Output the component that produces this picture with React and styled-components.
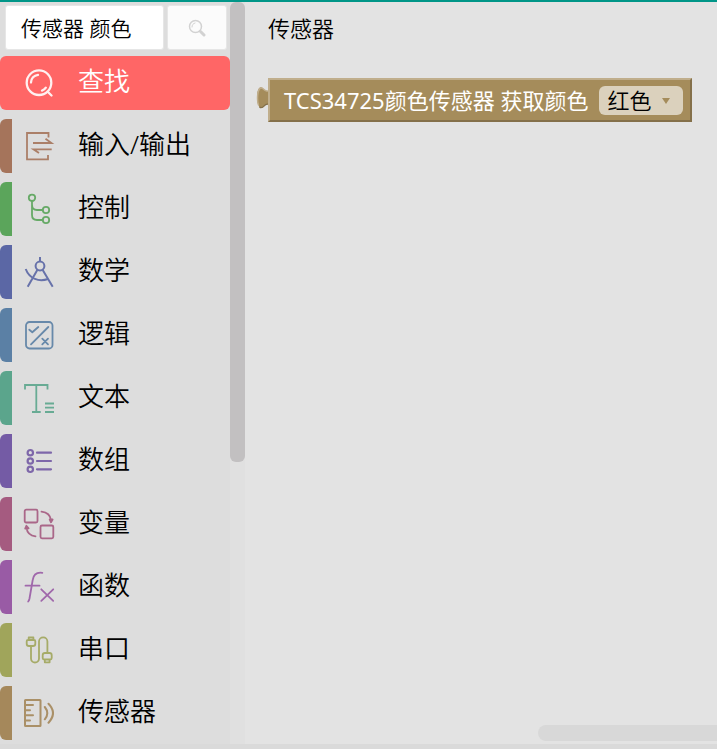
import React from "react";
import styled, { createGlobalStyle } from "styled-components";

const GlobalStyle = createGlobalStyle`
  *, *::before, *::after { box-sizing: border-box; }
  body {
    margin: 0;
    background: #dadada;
    color: #000;
    font-family: "Noto Sans", "Noto Sans CJK SC", sans-serif;
    font-weight: 350;
  }
  button, input, select { font: inherit; color: inherit; }
`;

const Page = styled.div`
  display: flex;
  min-height: 100vh;
  border-top: 2px solid #009688;
  border-bottom: 5px solid #dadada;
`;

const Sidebar = styled.aside`
  flex: none;
  width: 230px;
  padding: 3px 0 4px;
  background: #dddddd;
`;

const SearchForm = styled.form`
  display: flex;
  gap: 3px;
  height: 45px;
  margin: 0 3px 6px 5px;
`;

const SearchInput = styled.input`
  flex: 1;
  min-width: 0;
  padding: 0 15px 2px;
  border: 1px solid #e6e6e6;
  border-radius: 3px;
  background: #fff;
  font-size: 21px;
  outline: none;
`;

const SearchButton = styled.button`
  display: flex;
  align-items: center;
  justify-content: center;
  width: 60px;
  padding: 0;
  border: 1px solid #e6e6e6;
  border-radius: 3px;
  background: #fbfbfb;
  color: #d2d2d2;
`;

const CategoryList = styled.nav`
  display: flex;
  flex-direction: column;
  gap: 9px;
`;

const Category = styled.button`
  display: flex;
  align-items: center;
  gap: 24px;
  height: 54px;
  padding: 0 0 0 12px;
  border: 0;
  border-left: 12px solid ${(p) => p.$color};
  border-radius: 6px;
  background: ${(p) => (p.$active ? p.$color : "transparent")};
  color: ${(p) => (p.$active ? "#fff" : "#000")};
  text-align: left;
  cursor: pointer;
`;

const CategoryIcon = styled.svg`
  flex: none;
  width: 30px;
  height: 30px;
  overflow: visible;
  fill: none;
  stroke: ${(p) => p.$color};
  stroke-width: 1.8;
  stroke-linecap: round;
  stroke-linejoin: round;
  opacity: 0.9;
`;

const CategoryName = styled.span`
  padding-bottom: 4px;
  font-size: 26px;
  line-height: 36px;
  white-space: nowrap;
`;

const ScrollTrack = styled.div`
  flex: none;
  width: 15px;
  background: #e0e0e0;
`;

const ScrollThumb = styled.div`
  height: 62%;
  border-radius: 6px;
  background: #c2c0c1;
`;

const Workspace = styled.main`
  flex: 1;
  min-width: 0;
  display: flex;
  flex-direction: column;
  padding: 10px 0 3px;
  background: #e3e3e3;
  overflow: hidden;
`;

const Heading = styled.h1`
  margin: 0 0 34px 23px;
  font-size: 22px;
  font-weight: 350;
  line-height: 32px;
`;

const Block = styled.div`
  display: flex;
  align-self: flex-start;
  height: 44px;
  margin-left: 11px;
`;

const Knob = styled.svg`
  flex: none;
  width: 12px;
  height: 44px;
`;

const BlockBody = styled.div`
  display: flex;
  align-items: center;
  gap: 11px;
  padding: 0 7px 0 14px;
  border: 2px solid;
  border-color: #c0ae8c #84704a #84704a #c0ae8c;
  background: #a58c5b;
  color: #fff;
  font-size: 22px;
  font-weight: 400;
  white-space: nowrap;
`;

const BlockLabel = styled.label`
  padding-bottom: 2px;
`;

const DropdownWrap = styled.span`
  position: relative;
  display: flex;
`;

const Dropdown = styled.select`
  appearance: none;
  width: 84px;
  height: 29px;
  padding: 0 8px;
  border: 0;
  border-radius: 6px;
  background: #dbd1bd;
  color: #000;
  font-weight: 350;
  line-height: 29px;
`;

const DropdownArrow = styled.svg`
  position: absolute;
  top: 12px;
  right: 13px;
  width: 8px;
  height: 6px;
  fill: #a58c5b;
  pointer-events: none;
`;

const HorizontalThumb = styled.div`
  align-self: flex-end;
  width: 38%;
  height: 16px;
  margin-top: auto;
  border-radius: 8px 0 0 8px;
  background: #d8d8d8;
`;

const MagnifierIcon = () => (
  <svg width="18" height="18" viewBox="0 0 18 18" fill="none" stroke="currentColor" strokeLinecap="round" aria-hidden="true">
    <circle cx="7.500" cy="7.500" r="6" strokeWidth="1.500" />
    <path d="M4 8c0-2 1-3.500 3-4" strokeWidth="1" />
    <path d="m12.500 12.500 3.500 3.500" strokeWidth="3" />
  </svg>
);

const categories = [
  {
    name: "查找", color: "#ff6666", active: true,
    icon: (
      <g strokeWidth="2.300">
        <circle cx="15" cy="14.700" r="12.300" />
        <path d="M24 24l3.500 3.500M7 14.500c0-4 3-7.300 7-7.700M18 22.600q2.400-.8 3.800-3" />
      </g>
    ),
  },
  {
    name: "输入/输出", color: "#a5745b",
    icon: <path strokeLinecap="butt" strokeLinejoin="miter" d="M24.500 6.500V2H3v26.300h21V24M9 12h18.500l-6-4.300M27.700 18.300H9.500L15 22" />,
  },
  {
    name: "控制", color: "#5ba55b",
    icon: <><circle cx="8" cy="3.800" r="3.200" /><circle cx="22" cy="16" r="3.200" /><circle cx="22" cy="26" r="3.200" /><path d="M8 7v14q0 5 5 5h5.500M8 10.500q0 5.500 5 5.500h5.500" /></>,
  },
  {
    name: "数学", color: "#5b67a5",
    icon: <g strokeWidth="2" strokeLinecap="butt"><circle cx="16" cy="9" r="4.400" /><path d="M16 0v4.500M13.300 13 3.700 29.700M18.700 13l10 16.700M1.700 12C5.500 22 15 25 24 22" /></g>,
  },
  {
    name: "逻辑", color: "#5b80a5",
    icon: <><rect x="2" y="2" width="26.500" height="26.500" rx="3.500" /><path d="m5.300 9.700 3 2.500 6-5.200M7 24.300 24.300 7M18.300 18.700l5.700 5.600M24 18.700l-5.700 5.600" /></>,
  },
  {
    name: "文本", color: "#5ba58c",
    icon: <path strokeLinecap="butt" strokeLinejoin="miter" d="M1 6.500V2h22.500v4.500M12.300 2v26.700M8 29h8.700M21 20.500h9M21 24.700h9M21 29h9" />,
  },
  {
    name: "数组", color: "#745ba5",
    icon: <g strokeWidth="2.200"><circle cx="6.300" cy="6.700" r="2.700" /><circle cx="6.300" cy="15" r="2.700" /><circle cx="6.300" cy="23.300" r="2.700" /><path d="M13 6.700h14M13 15h14M13 23.300h14" /></g>,
  },
  {
    name: "变量", color: "#a55b80",
    icon: <><rect x=".7" y=".7" width="12.800" height="12.800" rx="1.500" /><rect x="16.500" y="16.500" width="12.800" height="12.800" rx="1.500" /><path d="M17.500 2.700q8.500 1 9.500 8.500M25.700 10.500l1.300 2.800 1.600-2.800zM11.500 27.300q-8-1-9-8.500M1.200 19.700l1.200-2.900 2.200 2.500z" /></>,
  },
  {
    name: "函数", color: "#995ba5",
    icon: <path d="M18.300.8C12.500 0 9.500 2.500 8.700 8L5.500 26.500q-.4 2-1.300 3M1.500 13.700h14M17.300 17.300l11.900 11.500M29.200 17.300 17.300 28.800" />,
  },
  {
    name: "串口", color: "#a0a55b",
    icon: <path d="M4.700 5V2.500h4.700V5M4 5h6q1.300 0 1.300 1.300v2.400Q11.300 11 9 11H5Q2.700 11 2.700 8.700V6.300Q2.700 5 4 5M7 11v12.500a4 4 0 0 0 8 0v-17a4.200 4.200 0 0 1 8.400 0V18M21 18h4.500q2.200 0 2.200 2.200V23q0 1.500-1.500 1.500h-6q-1.500 0-1.500-1.500v-2.800Q18.700 18 21 18M20.800 24.500v2.800h4.800v-2.800" />,
  },
  {
    name: "传感器", color: "#a5885b",
    icon: <g strokeWidth="2"><rect x="1" y="2" width="15.500" height="26" rx=".5" /><path d="M1 7h8M1 12.200h5M1 17.300h8M1 22.500h5M20.800 9q5 6.200 0 12.300M24.500 5.700q9 9.300 0 19" /></g>,
  },
];

export default function App() {
  return (
    <>
      <GlobalStyle />
      <Page>
        <Sidebar>
          <SearchForm onSubmit={(e) => e.preventDefault()}>
            <SearchInput aria-label="查找" defaultValue="传感器 颜色" />
            <SearchButton type="submit" aria-label="查找">
              <MagnifierIcon />
            </SearchButton>
          </SearchForm>
          <CategoryList>
            {categories.map((c) => (
              <Category key={c.name} type="button" $color={c.color} $active={c.active}>
                <CategoryIcon viewBox="0 0 30 30" $color={c.active ? "#fff" : c.color} aria-hidden="true">
                  {c.icon}
                </CategoryIcon>
                <CategoryName>{c.name}</CategoryName>
              </Category>
            ))}
          </CategoryList>
        </Sidebar>
        <ScrollTrack>
          <ScrollThumb />
        </ScrollTrack>
        <Workspace>
          <Heading>传感器</Heading>
          <Block>
            <Knob viewBox="0 0 12 44" aria-hidden="true">
              <path d="M12 13C8 14 8 9 4.500 9.300C-.5 11 .2 28 4.500 30C8 31 8 25.500 12 26.500Z" fill="#a58c5b" />
              <path d="M12 13C8 14 8 9.500 4.500 10C1 12 1 23 2.500 27" fill="none" stroke="#c0ae8c" strokeWidth="1.500" />
              <path d="M3.500 29.200C8 31.500 7.500 25.500 12 26.200" fill="none" stroke="#84704a" strokeWidth="1.300" />
            </Knob>
            <BlockBody>
              <BlockLabel htmlFor="sensor-color">TCS34725颜色传感器 获取颜色</BlockLabel>
              <DropdownWrap>
                <Dropdown id="sensor-color" defaultValue="红色">
                  <option>红色</option>
                </Dropdown>
                <DropdownArrow viewBox="0 0 8 6" aria-hidden="true">
                  <path d="M0 0h8L4 6z" />
                </DropdownArrow>
              </DropdownWrap>
            </BlockBody>
          </Block>
          <HorizontalThumb />
        </Workspace>
      </Page>
    </>
  );
}
